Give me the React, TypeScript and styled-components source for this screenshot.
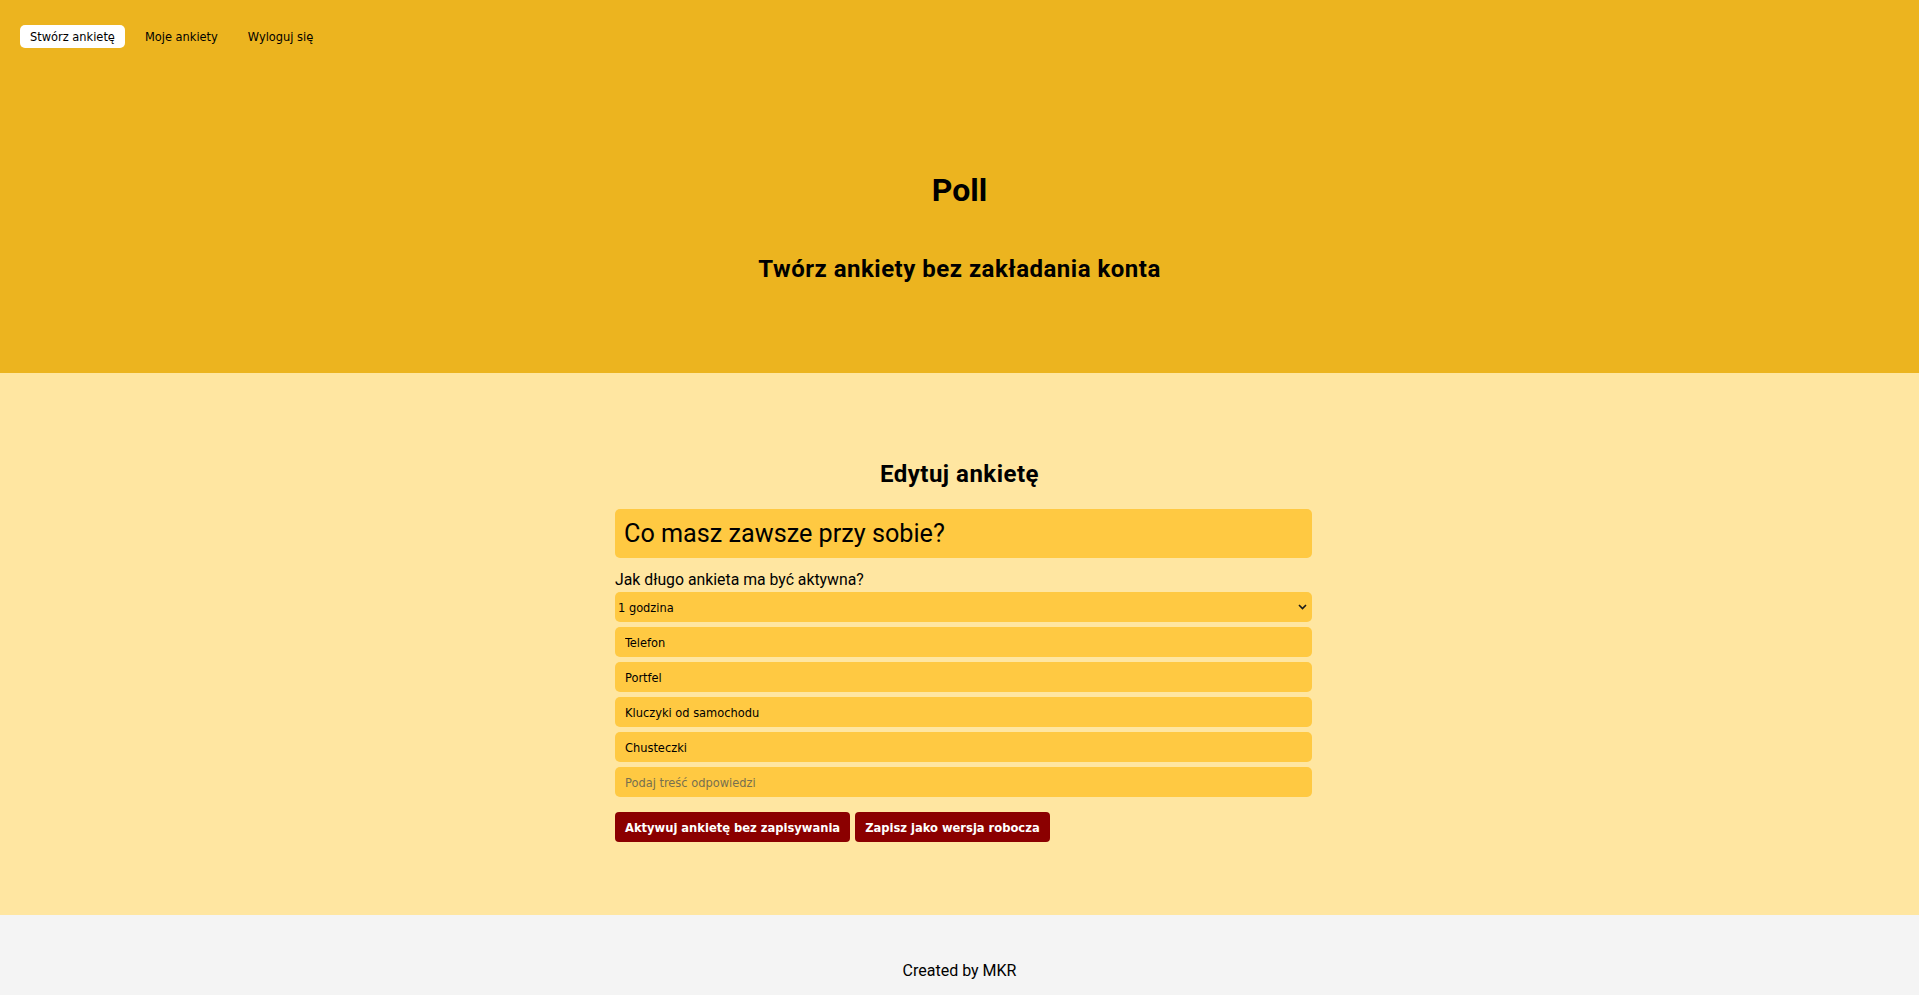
import React from "react";
import styled, { createGlobalStyle } from "styled-components";

const GlobalStyle = createGlobalStyle`
  html, body {
    margin: 0;
    padding: 0;
  }
  body {
    font-family: Roboto, "Liberation Sans", sans-serif;
    color: #000;
    background: #f4f4f4;
  }
  * {
    box-sizing: border-box;
  }
`;

const controlFont = `"DejaVu Sans Condensed", "DejaVu Sans", sans-serif`;

const Header = styled.header`
  background: #ecb41f;
  padding: 25px 20px 88px;
`;

const Nav = styled.nav`
  display: flex;
  gap: 10px;
`;

const NavLink = styled.a<{ $active?: boolean }>`
  display: block;
  height: 23px;
  line-height: 23px;
  padding: 0 10px;
  border-radius: 5px;
  background: ${(p) => (p.$active ? "#ffffff" : "transparent")};
  font-family: ${controlFont};
  font-size: 12.7px;
  color: #000;
  text-decoration: none;
  cursor: pointer;
`;

const Hero = styled.div`
  display: flex;
  flex-direction: column;
  align-items: center;
  margin-top: 122px;
`;

const Title = styled.h1`
  margin: 0;
  font-size: 32px;
  line-height: 40px;
  font-weight: 700;
`;

const Subtitle = styled.h2`
  margin: 43px 0 0;
  font-size: 24px;
  line-height: 32px;
  font-weight: 700;
  letter-spacing: 0.5px;
`;

const Main = styled.main`
  background: #ffe6a1;
  padding: 85px 0 73px;
`;

const SectionTitle = styled.h2`
  margin: 0 0 19px;
  text-align: center;
  font-size: 24px;
  line-height: 32px;
  font-weight: 700;
  letter-spacing: 0.5px;
`;

const Form = styled.form`
  display: flex;
  flex-direction: column;
  width: 697px;
  margin-left: calc(50% - 344.5px);
`;

const Field = styled.input`
  display: block;
  width: 100%;
  height: 30px;
  padding: 0 10px;
  border: none;
  border-radius: 5px;
  background: #ffc942;
  font-family: ${controlFont};
  font-size: 12.7px;
  color: #000;
  outline: none;

  &::placeholder {
    color: #77704f;
  }
`;

const QuestionField = styled(Field)`
  height: 49px;
  padding-left: 9px;
  font-family: Roboto, "Liberation Sans", sans-serif;
  font-size: 25.2px;
`;

const Label = styled.label`
  display: block;
  margin-top: 11px;
  font-size: 15.8px;
  line-height: 21px;
`;

const SelectWrap = styled.div`
  position: relative;
  margin-top: 2px;
`;

const Select = styled.select`
  display: block;
  width: 100%;
  height: 30px;
  padding: 0 20px 0 3px;
  border: none;
  border-radius: 5px;
  background: #ffc942;
  font-family: ${controlFont};
  font-size: 12.7px;
  color: #000;
  appearance: none;
  -webkit-appearance: none;
  outline: none;
`;

const Chevron = styled.svg`
  position: absolute;
  right: 5px;
  top: 12px;
  width: 9px;
  height: 6px;
  pointer-events: none;
`;

const Answers = styled.div`
  display: flex;
  flex-direction: column;
  gap: 5px;
  margin-top: 5px;
`;

const Actions = styled.div`
  display: flex;
  gap: 5px;
  margin-top: 15px;
`;

const Button = styled.button`
  height: 30px;
  padding: 0 10px;
  border: none;
  border-radius: 4px;
  background: #8b0000;
  color: #fff;
  font-family: ${controlFont};
  font-size: 12.8px;
  font-weight: 700;
  cursor: pointer;
`;

const Footer = styled.footer`
  background: #f4f4f4;
  padding: 45px 0 14px;
  text-align: center;
  font-size: 16px;
  line-height: 21px;
`;

const answers = ["Telefon", "Portfel", "Kluczyki od samochodu", "Chusteczki"];

export default function App() {
  return (
    <>
      <GlobalStyle />
      <Header>
        <Nav>
          <NavLink $active>Stwórz ankietę</NavLink>
          <NavLink>Moje ankiety</NavLink>
          <NavLink>Wyloguj się</NavLink>
        </Nav>
        <Hero>
          <Title>Poll</Title>
          <Subtitle>Twórz ankiety bez zakładania konta</Subtitle>
        </Hero>
      </Header>
      <Main>
        <SectionTitle>Edytuj ankietę</SectionTitle>
        <Form onSubmit={(e) => e.preventDefault()}>
          <QuestionField defaultValue="Co masz zawsze przy sobie?" />
          <Label htmlFor="duration">Jak długo ankieta ma być aktywna?</Label>
          <SelectWrap>
            <Select id="duration" defaultValue="1h">
              <option value="1h">1 godzina</option>
              <option value="6h">6 godzin</option>
              <option value="12h">12 godzin</option>
              <option value="24h">24 godziny</option>
              <option value="7d">7 dni</option>
            </Select>
            <Chevron viewBox="0 0 9 6" aria-hidden="true">
              <polyline points="1,1 4.5,4.5 8,1" fill="none" stroke="#1a1a1a" strokeWidth="1.6" />
            </Chevron>
          </SelectWrap>
          <Answers>
            {answers.map((a) => (
              <Field key={a} defaultValue={a} />
            ))}
            <Field placeholder="Podaj treść odpowiedzi" />
          </Answers>
          <Actions>
            <Button type="button">Aktywuj ankietę bez zapisywania</Button>
            <Button type="button">Zapisz jako wersja robocza</Button>
          </Actions>
        </Form>
      </Main>
      <Footer>Created by MKR</Footer>
    </>
  );
}
